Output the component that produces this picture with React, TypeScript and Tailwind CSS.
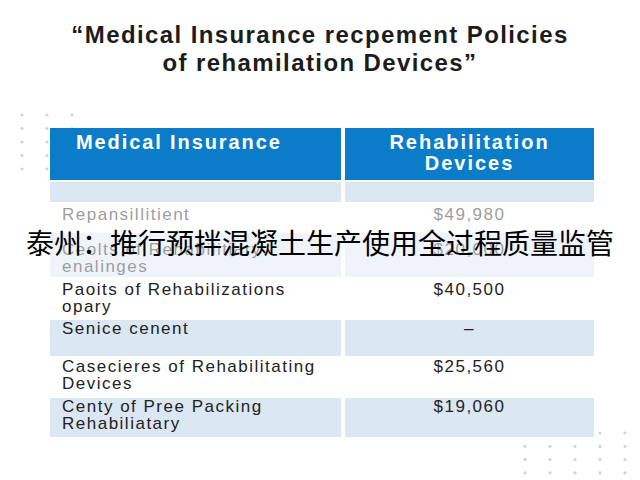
const rows = [
  { left: '', right: '', h: 'h-[20px]', tint: true, pt: 'pt-0' },
  { left: 'Repansillitient', right: '$49,980', h: 'h-[27px]', tint: false, pt: 'pt-[2px]' },
  { left: 'Ceolts of Rehabilitiary\nenalinges', right: '$20,000', h: 'h-[44px]', tint: true, pt: 'pt-[8px]' },
  { left: 'Paoits of Rehabilizations\nopary', right: '$40,500', h: 'h-[39px]', tint: false, pt: 'pt-[2px]' },
  { left: 'Senice cenent', right: '–', h: 'h-[36px]', tint: true, pt: 'pt-0' },
  { left: 'Casecieres of Rehabilitating\nDevices', right: '$25,560', h: 'h-[38px]', tint: false, pt: 'pt-0' },
  { left: 'Centy of Pree Packing\nRehabiliatary', right: '$19,060', h: 'h-[39px]', tint: true, pt: 'pt-0' },
]

function Dots({ cols, rows, dx, dy }: { cols: number; rows: number; dx: number; dy: number }) {
  const pts = []
  for (let r = 0; r < rows; r++)
    for (let c = 0; c < cols; c++) pts.push(<circle key={`${r}-${c}`} cx={3 + c * dx} cy={3 + r * dy} r={1.6} fill="#c9d5e2" />)
  return (
    <svg width={6 + (cols - 1) * dx} height={6 + (rows - 1) * dy}>
      {pts}
    </svg>
  )
}

export default function App() {
  return (
    <div className="relative w-[640px] h-[480px] overflow-hidden bg-white font-['Liberation_Sans',Arial,sans-serif]">
      {/* background dot patterns */}
      <div className="absolute left-[19px] top-[112px]">
        <Dots cols={3} rows={5} dx={25} dy={13.5} />
      </div>
      <div className="absolute left-[522px] top-[430px]">
        <Dots cols={5} rows={4} dx={25} dy={13.3} />
      </div>

      <div className="relative flex flex-col items-center pt-[21px]">
        <h1 className="text-center text-[24px] leading-[28px] font-bold tracking-[1.4px] text-[#1c1c1c]">
          “Medical Insurance recpement Policies
          <br />
          of rehamilation Devices”
        </h1>

        {/* table */}
        <div className="mt-[51px] grid grid-cols-[291px_249px] gap-x-[4px] gap-y-[2px] self-start ml-[50px]">
          <div className="h-[52px] bg-[#0b7cc8] pl-[26px] pt-[4px] text-[20px] leading-[20px] font-bold tracking-[1.9px] text-white">
            Medical Insurance
          </div>
          <div className="h-[52px] bg-[#0b7cc8] pt-[4px] text-center text-[20px] leading-[21px] font-bold tracking-[2px] text-white">
            Rehabilitation
            <br />
            Devices
          </div>
          {rows.map((r, i) => (
            <div key={i} className="contents">
              <div className={`${r.h} ${r.pt} ${r.tint ? 'bg-[#dce7f4]' : 'bg-white'} pl-[12px] text-[17px] leading-[17px] tracking-[1.5px] text-[#222] whitespace-pre-line`}>
                {r.left}
              </div>
              <div className={`${r.h} ${r.pt} ${r.tint ? 'bg-[#dce7f4]' : 'bg-white'} text-center text-[17px] leading-[17px] tracking-[1.5px] text-[#222]`}>
                {r.right}
              </div>
            </div>
          ))}
        </div>
      </div>

      {/* subtitle caption band */}
      <div className="absolute left-0 right-0 top-[203px] h-[74px] bg-white/55" />
      <div className="absolute left-0 right-0 top-[225px] text-center text-[28px] leading-[34px] text-black font-['Noto_Sans_CJK_SC',sans-serif]">
        泰州：推行预拌混凝土生产使用全过程质量监管
      </div>
    </div>
  )
}
